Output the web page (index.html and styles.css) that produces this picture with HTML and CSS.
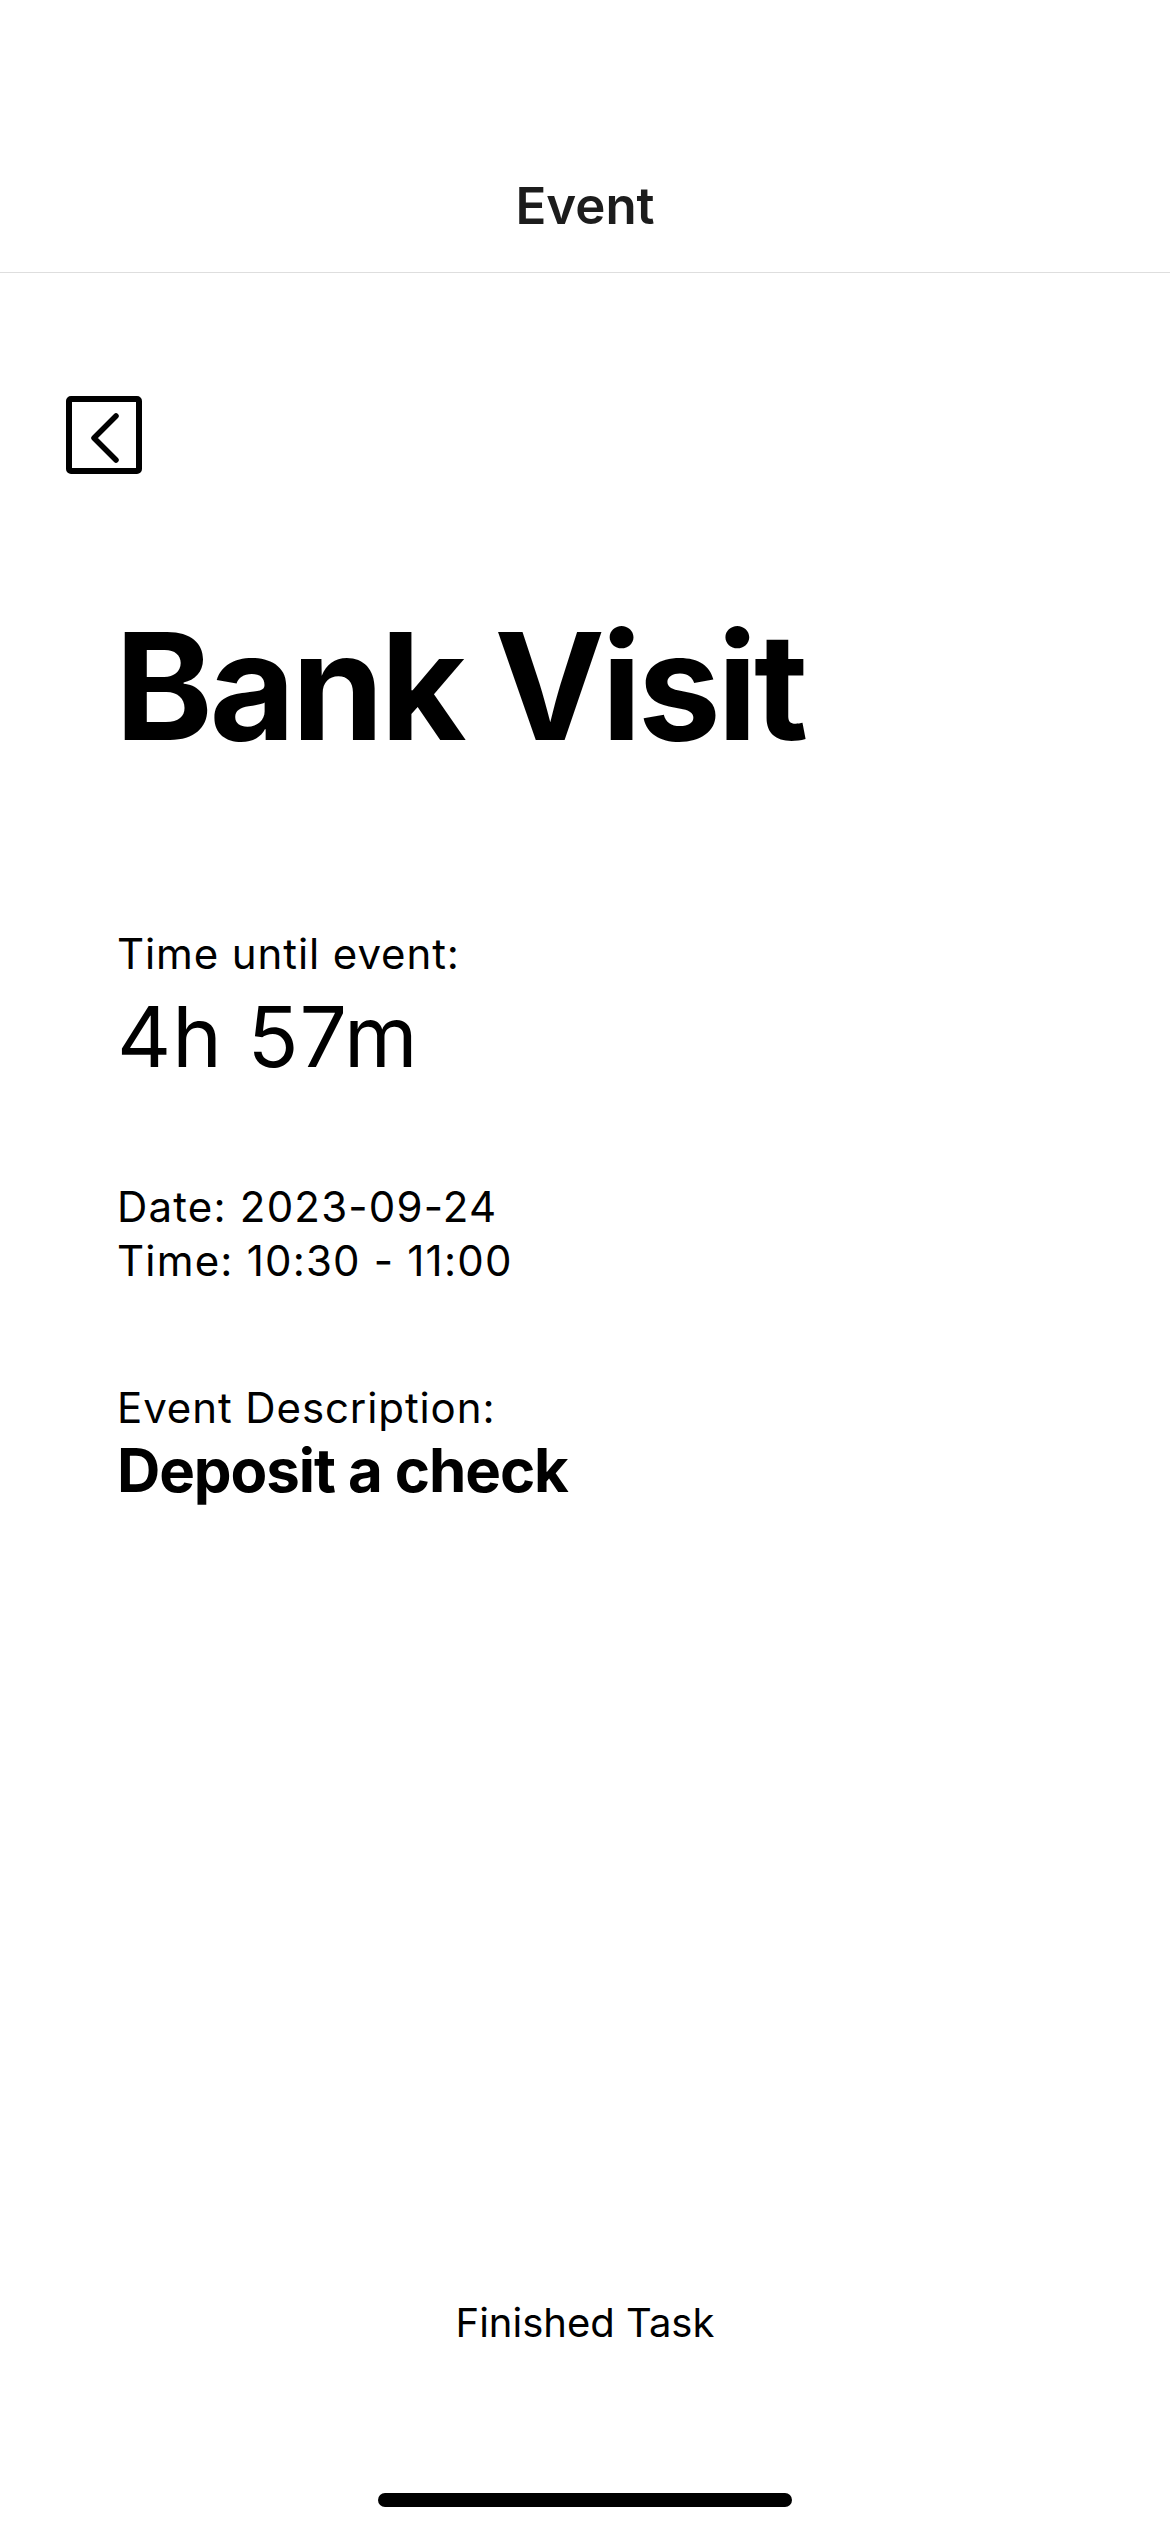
FILE: index.html
```html
<!DOCTYPE html>
<html lang="en">
<head>
    <meta charset="UTF-8">
    <meta name="viewport" content="width=device-width, initial-scale=1.0">
    <title>Event</title>
    <link rel="stylesheet" href="styles.css">
</head>
<body>
    <div class="screen">
        <header class="nav-bar">
            <h1 class="nav-title">Event</h1>
        </header>

        <main class="event">
            <button class="back-btn" aria-label="Back">
                <svg viewBox="0 0 64 66" width="64" height="66">
                    <path d="M44 14 L22 36 L44 58" fill="none" stroke="#000" stroke-width="5.5" stroke-linecap="round" stroke-linejoin="round"/>
                </svg>
            </button>

            <h2 class="event-title">Bank Visit</h2>

            <div class="countdown">
                <div class="label">Time until event:</div>
                <div class="countdown-value">4h 57m</div>
            </div>

            <div class="schedule">
                <div class="label">Date: 2023-09-24</div>
                <div class="label">Time: 10:30 - 11:00</div>
            </div>

            <div class="description">
                <div class="label">Event Description:</div>
                <div class="description-text">Deposit a check</div>
            </div>
        </main>

        <footer class="actions">
            <button class="finish-btn">Finished Task</button>
            <div class="home-indicator"></div>
        </footer>
    </div>
</body>
</html>
```

FILE: styles.css
```css
* {
    box-sizing: border-box;
}
body {
    margin: 0;
    background: #ffffff;
    font-family: Inter, "Noto Sans", sans-serif;
    color: #000;
}
.screen {
    width: 1170px;
    min-height: 2532px;
    display: flex;
    flex-direction: column;
}
.nav-bar {
    padding: 176px 0 36px;
    border-bottom: 1px solid #dedede;
    text-align: center;
}
.nav-title {
    margin: 0;
    font-size: 51px;
    line-height: 60px;
    font-weight: 600;
    color: #1c1c1c;
}
.event {
    flex: 1;
    padding: 123px 0 0 117px;
}
.back-btn {
    display: flex;
    align-items: center;
    justify-content: center;
    width: 76px;
    height: 78px;
    margin-left: -51px;
    padding: 0;
    border: 6px solid #000;
    border-radius: 5px;
    background: none;
    cursor: pointer;
}
.event-title {
    margin: 123px 0 0 -2px;
    font-size: 148px;
    line-height: 180px;
    font-weight: 700;
    letter-spacing: -3.5px;
}
.label {
    font-size: 42px;
    line-height: 52px;
    letter-spacing: 0.9px;
}
.countdown {
    margin-top: 151px;
}
.countdown-value {
    margin-top: 7px;
    font-size: 84px;
    line-height: 100px;
    letter-spacing: 1px;
}
.schedule {
    margin-top: 93px;
}
.schedule .label {
    line-height: 54px;
    letter-spacing: 1.2px;
}
.description {
    margin-top: 94px;
}
.description-text {
    font-size: 60px;
    line-height: 72px;
    font-weight: 700;
    letter-spacing: -1.1px;
}
.actions {
    display: flex;
    flex-direction: column;
    align-items: center;
    padding-bottom: 25px;
}
.finish-btn {
    padding: 0;
    border: none;
    background: none;
    font-family: inherit;
    font-size: 40px;
    line-height: 52px;
    color: #000;
    cursor: pointer;
}
.home-indicator {
    width: 414px;
    height: 14px;
    margin-top: 144px;
    border-radius: 7px;
    background: #000;
}
```
